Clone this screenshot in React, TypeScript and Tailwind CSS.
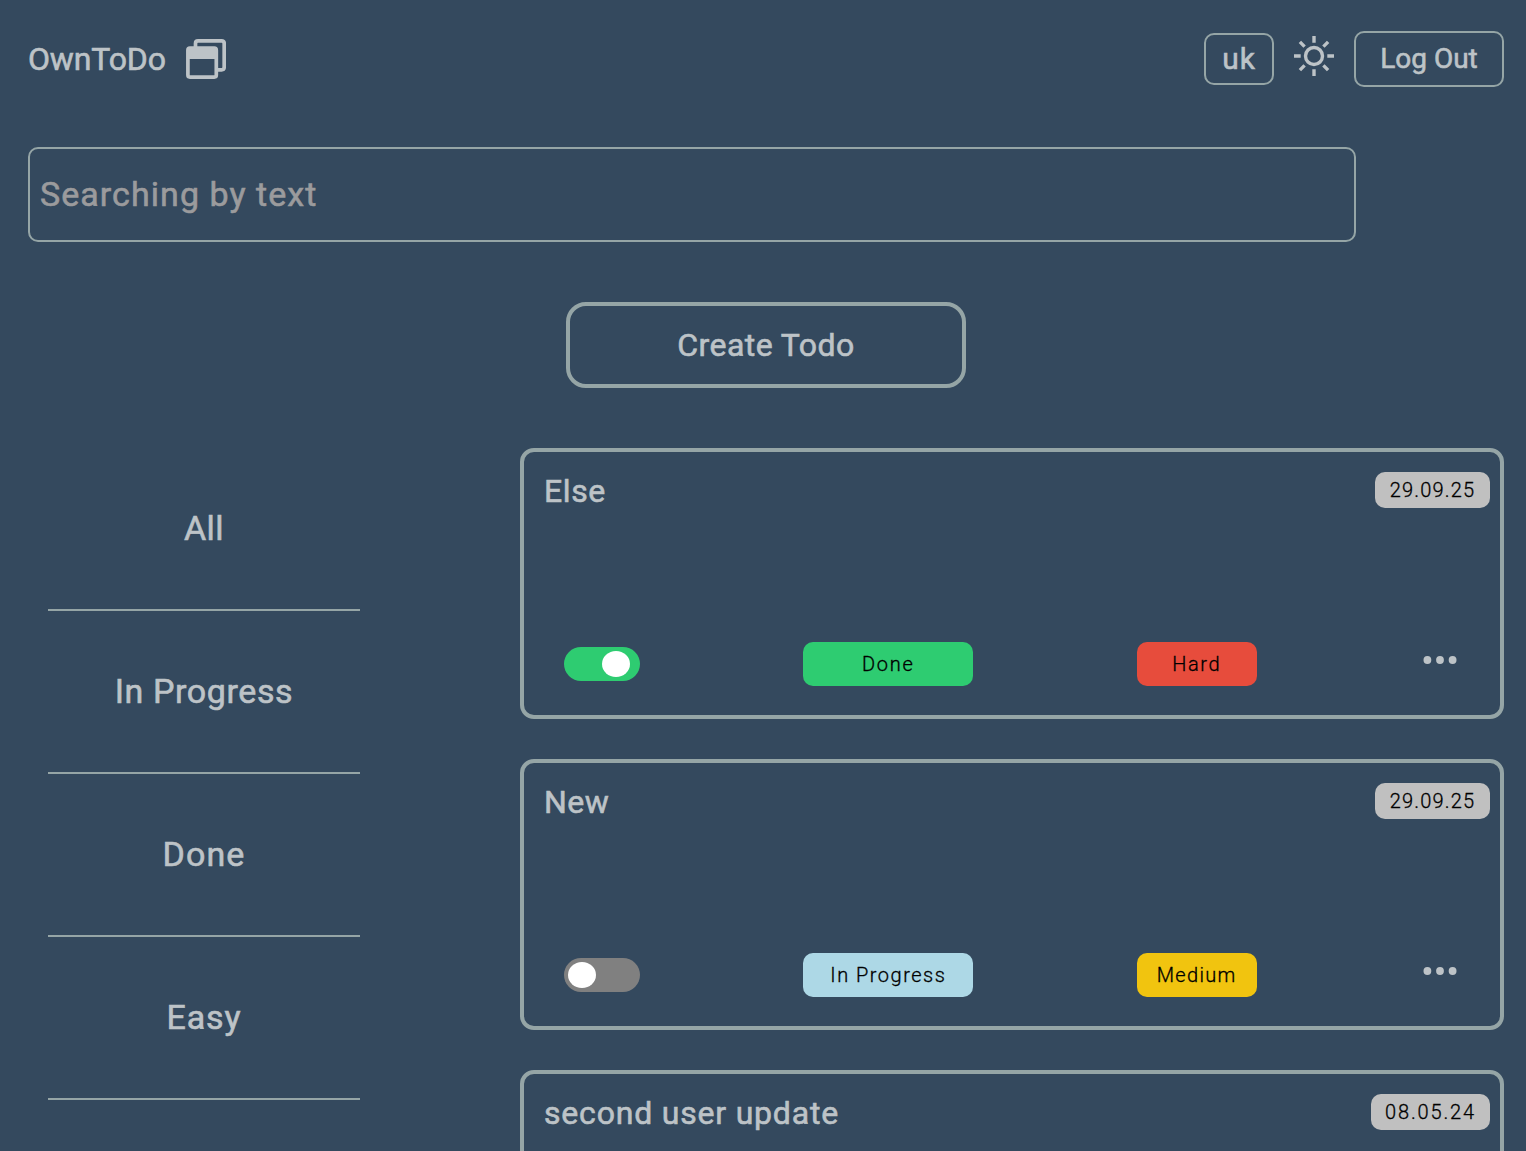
type Todo = {
  title: string;
  titleClass: string;
  date: string;
  dateClass: string;
  done?: boolean;
  level?: string;
  levelClass?: string;
};

const todos: Todo[] = [
  {
    title: "Else",
    titleClass: "tracking-[0.6px]",
    date: "29.09.25",
    dateClass: "w-[115px] tracking-[1.2px]",
    done: true,
    level: "Hard",
    levelClass: "bg-[#e74c3c] tracking-[1.6px]",
  },
  {
    title: "New",
    titleClass: "tracking-[0.5px]",
    date: "29.09.25",
    dateClass: "w-[115px] tracking-[1.2px]",
    done: false,
    level: "Medium",
    levelClass: "bg-[#f1c40f] tracking-[1.3px]",
  },
  {
    title: "second user update",
    titleClass: "tracking-[0.8px]",
    date: "08.05.24",
    dateClass: "w-[119px] tracking-[1.85px]",
  },
];

const filters = [
  { label: "All", className: "tracking-[0.5px]" },
  { label: "In Progress", className: "tracking-[0.6px]" },
  { label: "Done", className: "tracking-[1.1px]" },
  { label: "Easy", className: "tracking-[0.9px]" },
];

function WindowsIcon() {
  return (
    <svg className="size-10" viewBox="0 0 40 40" fill="none" stroke="currentColor" strokeWidth="3.7">
      <path d="M9.5 8V4.5Q9.5 1.9 12 1.9H35.6Q38.2 1.9 38.2 4.5V28.2Q38.2 30.8 35.6 30.8H32" />
      <rect x="1.9" y="9.2" width="28.4" height="28.9" rx="2" />
      <path d="M2 10H30.2V20H2Z" fill="currentColor" stroke="none" />
    </svg>
  );
}

function SunIcon() {
  return (
    <svg className="size-10" viewBox="0 0 40 40" fill="none" stroke="currentColor" strokeWidth="3.4">
      <circle cx="20" cy="20" r="8.5" />
      <path d="M20 0V6.7M20 33.3V40M0 20H6.7M33.3 20H40M5.9 5.9L10.6 10.6M29.4 29.4L34.1 34.1M34.1 5.9L29.4 10.6M10.6 29.4L5.9 34.1" />
    </svg>
  );
}

function Toggle({ on }: { on: boolean }) {
  return (
    <div
      className={
        on
          ? "flex h-[34px] w-[76px] items-center justify-end rounded-full bg-[#2ecc71] pr-2.5"
          : "flex h-[34px] w-[76px] items-center rounded-full bg-[#808080] pl-1"
      }
    >
      <span className="h-[26px] w-7 rounded-[50%] bg-white" />
    </div>
  );
}

function TodoCard({ todo }: { todo: Todo }) {
  return (
    <article className="flex h-[271px] shrink-0 flex-col justify-between rounded-[14px] border-4 border-[#95a5a6] pt-5 pr-2.5 pb-[27px] pl-5">
      <div className="flex items-start justify-between">
        <h2 className={`text-[32px] leading-[38px] ${todo.titleClass}`}>{todo.title}</h2>
        <time
          className={`flex h-9 items-center justify-center rounded-[10px] bg-[#c0c0c0] text-xl font-light text-black [-webkit-text-stroke:0.3px] ${todo.dateClass}`}
        >
          {todo.date}
        </time>
      </div>
      {todo.level && (
        <div className="flex items-center justify-between pr-[30px] pl-5 text-xl font-light text-black [-webkit-text-stroke:0.3px]">
          <Toggle on={!!todo.done} />
          <span
            className={
              todo.done
                ? "flex h-11 w-[170px] items-center justify-center rounded-[10px] bg-[#2ecc71] tracking-[1.8px]"
                : "flex h-11 w-[170px] items-center justify-center rounded-[10px] bg-[#add8e6] tracking-[1.5px]"
            }
          >
            {todo.done ? "Done" : "In Progress"}
          </span>
          <span className={`flex h-11 w-[120px] items-center justify-center rounded-[10px] ${todo.levelClass}`}>
            {todo.level}
          </span>
          <svg className="mb-2 size-10 text-[#bdc3c7]" viewBox="0 0 40 40" fill="currentColor">
            <circle cx="7.4" cy="20" r="3.9" />
            <circle cx="20" cy="20" r="3.9" />
            <circle cx="32.6" cy="20" r="3.9" />
          </svg>
        </div>
      )}
    </article>
  );
}

export default function App() {
  return (
    <div className="flex h-[1151px] flex-col overflow-hidden bg-[#34495e] pr-[22px] pl-7 font-[Roboto,sans-serif] font-normal text-[#bdc3c7] [-webkit-text-stroke:0.6px]">
      <header className="mt-[31px] flex h-14 items-center justify-between">
        <div className="flex items-center">
          <h1 className="w-[158px] text-[32px] leading-[38px] tracking-[-0.15px]">OwnToDo</h1>
          <WindowsIcon />
        </div>
        <div className="flex items-center gap-5">
          <button className="h-[52px] w-[70px] rounded-[10px] border-2 border-[#95a5a6] text-[30px] leading-none tracking-[1px]">
            uk
          </button>
          <div className="mb-1.5">
            <SunIcon />
          </div>
          <button className="h-14 w-[150px] rounded-[10px] border-2 border-[#95a5a6] text-[28px] leading-none">
            Log Out
          </button>
        </div>
      </header>

      <input
        className="mt-[60px] h-[95px] w-[1328px] shrink-0 rounded-[10px] border-2 border-[#95a5a6] bg-transparent px-2.5 pb-0.5 text-[34px] tracking-[1.05px] outline-none placeholder:text-[#9b9b9d]"
        placeholder="Searching by text"
      />

      <button className="mt-[60px] ml-[538px] h-[86px] w-[400px] shrink-0 rounded-[20px] border-4 border-[#95a5a6] text-[32px] tracking-[0.45px]">
        Create Todo
      </button>

      <main className="mt-[60px] flex min-h-0 flex-1 justify-between">
        <nav className="ml-5 w-[312px]">
          {filters.map((f) => (
            <a
              key={f.label}
              className={`flex h-[163px] items-center justify-center border-b-2 border-[#95a5a6] text-[34px] ${f.className}`}
            >
              {f.label}
            </a>
          ))}
        </nav>
        <section className="flex w-[984px] flex-col gap-10">
          {todos.map((t) => (
            <TodoCard key={t.title} todo={t} />
          ))}
        </section>
      </main>
    </div>
  );
}
